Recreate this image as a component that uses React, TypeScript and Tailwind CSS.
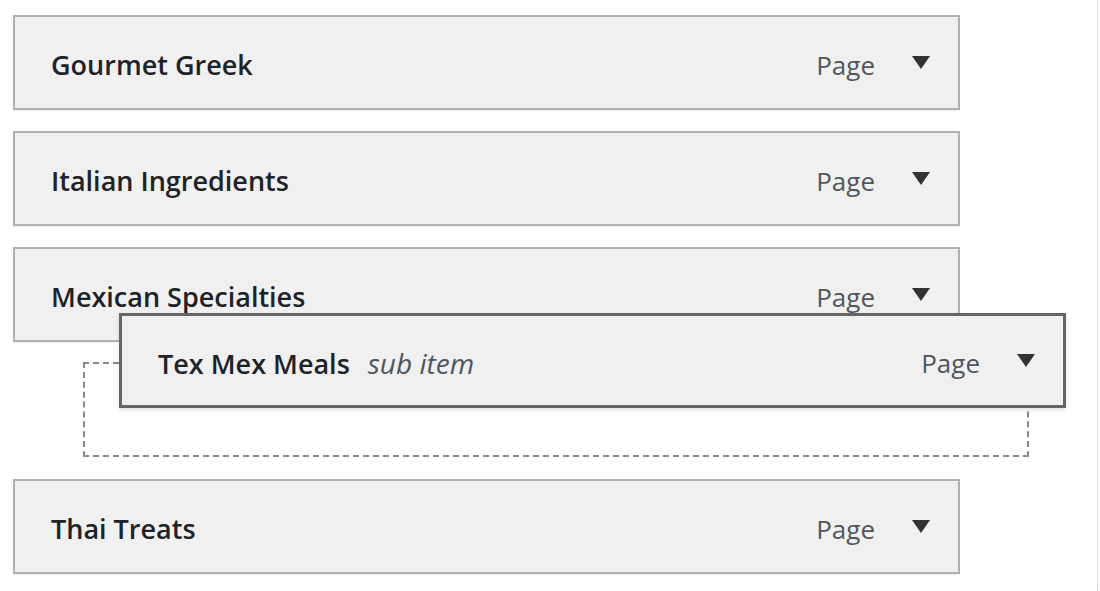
import React from "react";

const Tri = () => (
  <svg width="18" height="13" viewBox="0 0 18 13" className="block">
    <polygon points="0,0 18,0 9,13" fill="#333" />
  </svg>
);

function Item({ title, sub, dark }: { title: string; sub?: string; dark?: boolean }) {
  return (
    <div
      className={`flex h-[95px] w-[947px] items-center bg-[#f0f0f0] pl-[36px] pr-[28px] pt-[4px] ${
        dark ? "border-[3px] border-[#666] shadow-[0_2px_4px_rgba(0,0,0,0.12)]" : "border-2 border-[#b0b0b0] shadow-[0_1px_1px_rgba(0,0,0,0.05)]"
      }`}
    >
      <div className="flex flex-1 items-baseline">
        <span className="text-[27px] font-semibold leading-none text-[#1d2327]">{title}</span>
        {sub && <span className="ml-[18px] text-[28px] italic leading-none text-[#50575e]">{sub}</span>}
      </div>
      <span className="text-[26px] leading-none text-[#50575e]">Page</span>
      <span className="ml-[37px] -mt-[4px]">
        <Tri />
      </span>
    </div>
  );
}

export default function App() {
  return (
    <div
      className="relative h-[591px] w-[1100px] overflow-hidden bg-white"
      style={{ fontFamily: '"Open Sans", "Noto Sans", sans-serif' }}
    >
      <div className="flex flex-col pl-[13px] pt-[15px]">
        <Item title="Gourmet Greek" />
        <div className="mt-[21px]">
          <Item title="Italian Ingredients" />
        </div>
        <div className="mt-[21px]">
          <Item title="Mexican Specialties" />
        </div>
        <div className="ml-[70px] mt-[20px] h-[95px] w-[946px] border-2 border-dashed border-[#8a8a8a]" />
        <div className="mt-[22px]">
          <Item title="Thai Treats" />
        </div>
      </div>
      <div className="absolute left-[119px] top-[313px]">
        <Item title="Tex Mex Meals" sub="sub item" dark />
      </div>
      <div className="absolute right-[2px] top-0 h-full border-l border-dotted border-[#bbb]" />
    </div>
  );
}
